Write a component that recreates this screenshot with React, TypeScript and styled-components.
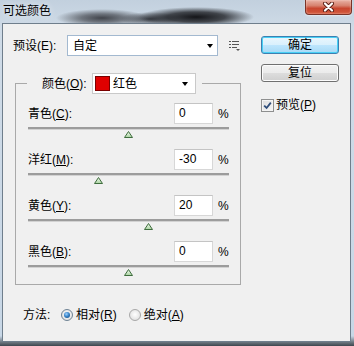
import React from "react";
import styled, { createGlobalStyle } from "styled-components";

const GlobalStyle = createGlobalStyle`
  html, body { margin: 0; padding: 0; background: #fff; }
  body {
    font-family: "Liberation Sans", "Noto Sans CJK SC", sans-serif;
    font-size: 12px;
    color: #000;
  }
  * { box-sizing: border-box; }
`;

const Window = styled.div`
  width: 354px;
  height: 346px;
  display: flex;
  flex-direction: column;
  background:
    radial-gradient(46px 9px at 102px 18px, rgba(50, 52, 58, 0.9) 0%, rgba(50, 52, 58, 0.6) 45%, rgba(50, 52, 58, 0) 100%),
    radial-gradient(58px 10px at 196px 17px, rgba(20, 21, 25, 1) 0%, rgba(20, 21, 25, 0.75) 50%, rgba(20, 21, 25, 0) 100%),
    radial-gradient(30px 7px at 150px 19px, rgba(30, 32, 38, 0.8), rgba(30, 32, 38, 0)),
    linear-gradient(180deg, #c2d0de 0px, #cfdbe7 28px, #c8d7e6 336px, #6f7982 342px, #3e464e 346px);
`;

const TitleBar = styled.div`
  height: 23px;
  display: flex;
  justify-content: space-between;
  align-items: flex-start;
`;

const TitleText = styled.div`
  padding: 3px 0 0 3px;
  line-height: 14px;
  font-size: 12px;
  font-family: "Noto Sans CJK SC", sans-serif;
  text-shadow: 0 0 6px rgba(255, 255, 255, 0.8);
`;

const CloseButton = styled.div`
  width: 47px;
  height: 15px;
  margin-right: 2px;
  border: 1px solid #7a3327;
  border-top: none;
  border-radius: 0 0 4px 4px;
  background: linear-gradient(180deg, #e8b1a4 0%, #d7826f 40%, #c8462f 60%, #d35a3d 100%);
  box-shadow: inset 0 0 2px rgba(255, 230, 220, 0.8), 0 1px 2px rgba(255, 255, 255, 0.5);
  display: flex;
  align-items: center;
  justify-content: center;
`;

const Panel = styled.div`
  flex: 1;
  margin: 0 3px 4px 2px;
  border: 1px solid #6f7e8c;
  background: #f0f0f0;
  display: flex;
  align-items: flex-start;
  padding: 11px 0 0 10px;
`;

const LeftColumn = styled.div`
  width: 228px;
  display: flex;
  flex-direction: column;
`;

const PresetRow = styled.div`
  display: flex;
  align-items: center;
  height: 21px;
`;

const FieldLabel = styled.span<{ $w?: number }>`
  width: ${(p) => (p.$w ? `${p.$w}px` : "auto")};
  flex: ${(p) => (p.$w ? "none" : "1")};
  white-space: nowrap;
  line-height: 16px;
`;

const Key = styled.span`
  text-decoration: underline;
  text-underline-offset: 1px;
`;

const Select = styled.div<{ $w: number; $border: string; $padR: number }>`
  width: ${(p) => p.$w}px;
  height: 21px;
  background: #fff;
  border: 1px solid ${(p) => p.$border};
  display: flex;
  align-items: center;
  padding: 0 ${(p) => p.$padR}px 0 5px;
  gap: 3px;
`;

const SelectText = styled.span`
  flex: 1;
  line-height: 16px;
  white-space: nowrap;
`;

const DropArrow = styled.span`
  width: 0;
  height: 0;
  border-left: 3.5px solid transparent;
  border-right: 3.5px solid transparent;
  border-top: 4px solid #000;
`;

const MenuIcon = styled.svg`
  margin-left: 11px;
  flex: none;
`;

const GroupBox = styled.fieldset`
  margin: 17px 0 0 2px;
  padding: 9px 11px 6px 12px;
  border: 1px solid #a9a9a9;
  width: 226px;
  min-width: 0;
`;

const Legend = styled.legend`
  margin-left: -1px;
  padding: 0 6px 0 15px;
  height: 21px;
`;

const LegendInner = styled.span`
  display: inline-flex;
  align-items: center;
  gap: 4px;
  height: 21px;
`;

const Swatch = styled.span`
  width: 15px;
  height: 15px;
  background: #e00000;
  border: 1px solid #7a0000;
  margin-left: -3px;
  flex: none;
`;

const SliderBlock = styled.div`
  display: flex;
  flex-direction: column;
  & + & {
    margin-top: 9px;
  }
`;

const InputRow = styled.div`
  display: flex;
  align-items: center;
  height: 21px;
`;

const NumberBox = styled.div`
  width: 39px;
  height: 21px;
  background: #fff;
  border: 1px solid #d7d7d7;
  border-top-color: #c4c4c4;
  padding-left: 4px;
  line-height: 19px;
`;

const Percent = styled.span`
  margin-left: 5px;
  width: 11px;
  line-height: 16px;
`;

const Slider = styled.div`
  position: relative;
  margin-top: 3px;
  height: 13px;
`;

const Track = styled.div`
  height: 3px;
  border-top: 2px solid #9c9c9c;
  background: #d2d2d2;
`;

const Thumb = styled.svg`
  position: absolute;
  top: 4px;
`;

const MethodRow = styled.div`
  margin: 22px 0 0 10px;
  display: flex;
  align-items: center;
  height: 16px;
`;

const MethodLabel = styled.span`
  width: 38px;
  line-height: 16px;
`;

const RadioOption = styled.span<{ $gapBefore: number }>`
  display: inline-flex;
  align-items: center;
  gap: 3px;
  margin-left: ${(p) => p.$gapBefore}px;
  line-height: 16px;
`;

const RadioCircle = styled.span<{ $checked: boolean }>`
  width: 12px;
  height: 12px;
  border-radius: 50%;
  border: 1px solid ${(p) => (p.$checked ? "#6f8394" : "#a8a8a8")};
  background: radial-gradient(circle at 50% 45%, #ffffff 0%, #e4e4e4 70%, #cfcfcf 100%);
  display: flex;
  align-items: center;
  justify-content: center;
  &::after {
    content: "";
    display: ${(p) => (p.$checked ? "block" : "none")};
    width: 6px;
    height: 6px;
    border-radius: 50%;
    background: radial-gradient(circle at 40% 35%, #9fd3ff 0%, #3a85c9 45%, #0d3f73 100%);
  }
`;

const RightColumn = styled.div`
  margin-left: 20px;
  padding-top: 1px;
  display: flex;
  flex-direction: column;
  width: 78px;
`;

const DialogButton = styled.div<{ $primary?: boolean }>`
  width: 78px;
  height: 18px;
  border-radius: 3px;
  border: 1px solid ${(p) => (p.$primary ? "#3c7fb1" : "#707070")};
  background: ${(p) =>
    p.$primary
      ? "linear-gradient(180deg, #eaf6fd 0%, #d9f0fc 50%, #bee6fd 50%, #a7d9f5 100%)"
      : "linear-gradient(180deg, #f2f2f2 0%, #ebebeb 50%, #dddddd 50%, #cfcfcf 100%)"};
  box-shadow: inset 0 0 0 1px ${(p) => (p.$primary ? "#48d0f5" : "#fcfcfc")};
  display: flex;
  align-items: center;
  justify-content: center;
  line-height: 16px;
  & + & {
    margin-top: 10px;
  }
`;

const CheckRow = styled.div`
  margin-top: 16px;
  display: flex;
  align-items: center;
  gap: 2px;
  height: 14px;
`;

const CheckBox = styled.span`
  width: 13px;
  height: 13px;
  border: 1px solid #8e8f8f;
  background: linear-gradient(135deg, #dcdcdc 0%, #f6f6f6 100%);
  box-shadow: inset 0 0 0 1px #f4f4f4;
  display: flex;
  align-items: center;
  justify-content: center;
`;

const CheckLabel = styled.span`
  line-height: 16px;
`;

type Channel = { name: string; key: string; value: number };

const channels: Channel[] = [
  { name: "青色", key: "C", value: 0 },
  { name: "洋红", key: "M", value: -30 },
  { name: "黄色", key: "Y", value: 20 },
  { name: "黑色", key: "B", value: 0 },
];

function ThumbIcon({ value }: { value: number }) {
  return (
    <Thumb width="9" height="7" viewBox="0 0 9 7" style={{ left: `${value + 100 - 4}px` }}>
      <defs>
        <linearGradient id="tg" x1="0" y1="0" x2="0" y2="1">
          <stop offset="0" stopColor="#f2fbef" />
          <stop offset="1" stopColor="#a9d3a1" />
        </linearGradient>
      </defs>
      <polygon points="4.5,0.5 8.5,6.5 0.5,6.5" fill="url(#tg)" stroke="#3f6d3e" strokeWidth="1" strokeLinejoin="round" />
    </Thumb>
  );
}

export default function App() {
  return (
    <>
      <GlobalStyle />
      <Window>
        <TitleBar>
          <TitleText>可选颜色</TitleText>
          <CloseButton>
            <svg width="13" height="10" viewBox="0 0 13 10">
              <path d="M3 1.5 L10 8.5 M10 1.5 L3 8.5" stroke="#5a1c12" strokeWidth="4" strokeLinecap="round" />
              <path d="M3 1.5 L10 8.5 M10 1.5 L3 8.5" stroke="#ffffff" strokeWidth="2.2" strokeLinecap="round" />
            </svg>
          </CloseButton>
        </TitleBar>
        <Panel>
          <LeftColumn>
            <PresetRow>
              <FieldLabel $w={54}>预设(E):</FieldLabel>
              <Select $w={151} $border="#a3b9d0" $padR={4}>
                <SelectText>自定</SelectText>
                <DropArrow />
              </Select>
              <MenuIcon width="11" height="10" viewBox="0 0 11 10">
                <rect x="0" y="0" width="2" height="1" fill="#555" />
                <rect x="3" y="0" width="7" height="1" fill="#555" />
                <rect x="0" y="3" width="2" height="1" fill="#555" />
                <rect x="3" y="3" width="7" height="1" fill="#555" />
                <rect x="0" y="6" width="2" height="1" fill="#555" />
                <rect x="3" y="6" width="5" height="1" fill="#555" />
                <polygon points="7,8 11,8 9,10" fill="#555" />
              </MenuIcon>
            </PresetRow>

            <GroupBox>
              <Legend>
                <LegendInner>
                  <FieldLabel $w={46}>
                    颜色(<Key>O</Key>):
                  </FieldLabel>
                  <Select $w={104} $border="#c9c9c9" $padR={7}>
                    <Swatch />
                    <SelectText>红色</SelectText>
                    <DropArrow />
                  </Select>
                </LegendInner>
              </Legend>

              {channels.map((c) => (
                <SliderBlock key={c.key}>
                  <InputRow>
                    <FieldLabel>
                      {c.name}(<Key>{c.key}</Key>):
                    </FieldLabel>
                    <NumberBox>{c.value}</NumberBox>
                    <Percent>%</Percent>
                  </InputRow>
                  <Slider>
                    <Track />
                    <ThumbIcon value={c.value} />
                  </Slider>
                </SliderBlock>
              ))}
            </GroupBox>

            <MethodRow>
              <MethodLabel>方法:</MethodLabel>
              <RadioOption $gapBefore={0}>
                <RadioCircle $checked />
                <span>
                  相对(<Key>R</Key>)
                </span>
              </RadioOption>
              <RadioOption $gapBefore={12}>
                <RadioCircle $checked={false} />
                <span>
                  绝对(<Key>A</Key>)
                </span>
              </RadioOption>
            </MethodRow>
          </LeftColumn>

          <RightColumn>
            <DialogButton $primary>确定</DialogButton>
            <DialogButton>复位</DialogButton>
            <CheckRow>
              <CheckBox>
                <svg width="9" height="9" viewBox="0 0 9 9">
                  <path d="M1.2 4.6 L3.6 7 L7.8 1.6" fill="none" stroke="#2f4d7a" strokeWidth="1.8" />
                </svg>
              </CheckBox>
              <CheckLabel>
                预览(<Key>P</Key>)
              </CheckLabel>
            </CheckRow>
          </RightColumn>
        </Panel>
      </Window>
    </>
  );
}
